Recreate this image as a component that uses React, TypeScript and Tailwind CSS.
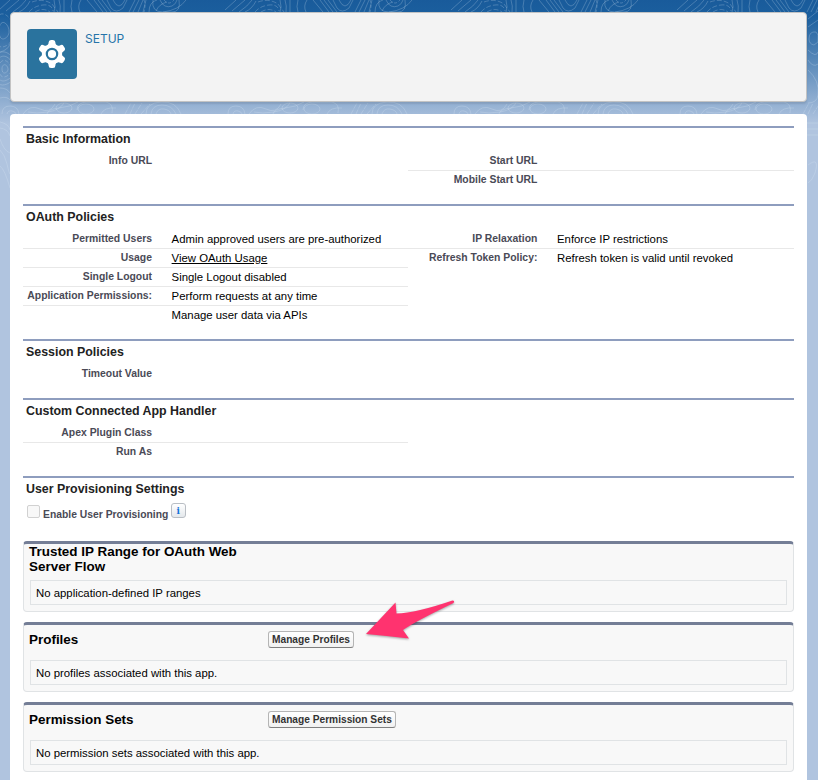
import React from "react";

type Field = { label?: string; value?: string; link?: boolean; line?: boolean };

function Rows({ items }: { items: Field[] }) {
  return (
    <div className="w-[385.4px] shrink-0">
      {items.map((f, i) => (
        <div key={i} className={`flex h-[19px] border-b ${f.line ? "border-[#e8e8e8]" : "border-transparent"}`}>
          <div className="w-[129px] shrink-0 text-right text-[10.4px] leading-[18px] font-bold whitespace-nowrap text-[#4a4a56]">{f.label}</div>
          <div className={`ml-[19.6px] text-[11.36px] leading-[19px] whitespace-nowrap text-black ${f.link ? "underline underline-offset-1" : ""}`}>{f.value}</div>
        </div>
      ))}
    </div>
  );
}

function Section({ title, height, children }: { title: string; height: string; children: React.ReactNode }) {
  return (
    <section className={`border-t-2 border-[#8e9dbe] ${height}`}>
      <h3 className="h-6 pt-[2px] pl-[3px] text-[12.4px] leading-[18px] font-bold text-[#222]">{title}</h3>
      {children}
    </section>
  );
}

function Related({ title, button, empty, height }: { title: string; button?: string; empty: string; height: string }) {
  return (
    <section className={`flex flex-col rounded-[4px] border border-t-[3px] border-[#e0e3e5] border-t-[#747e96] bg-[#f8f8f8] px-[5px] pb-[6px] ${height}`}>
      <div className={`flex ${button ? "pt-[5px]" : ""}`}>
        <h3 className={`w-[239px] pr-5 text-[13.44px] font-bold text-black ${button ? "pt-px leading-[17px]" : "leading-[15px]"}`}>{title}</h3>
        {button && (
          <button className="mt-px h-[17px] rounded-[3px] border border-[#b5b5b5] border-b-[#7f7f7f] bg-linear-to-b from-white to-[#f1f1f1] px-[3px] pt-px text-[10.18px] leading-[14px] font-bold whitespace-nowrap text-[#333]">{button}</button>
        )}
      </div>
      <div className="mx-px mt-auto h-[25px] border border-[#e0e3e5] pl-[5px] text-[11.36px] leading-[24px] text-black">{empty}</div>
    </section>
  );
}

const rings = (cx: number, cy: number, n: number, sx: number, sy: number) =>
  Array.from({ length: n }, (_, i) => {
    const a = sx * (i + 1);
    const b = sy * (i + 1);
    return (
      <path
        key={`${cx}-${cy}-${i}`}
        strokeDasharray={i % 3 === 1 ? "4 2" : undefined}
        d={`M${cx - a} ${cy} C${cx - a} ${cy - b} ${cx - a * 0.3} ${cy - b * 1.2} ${cx + a * 0.2} ${cy - b} S${cx + a * 1.1} ${cy - b * 0.3} ${cx + a} ${cy + b * 0.2} S${cx + a * 0.2} ${cy + b} ${cx - a * 0.2} ${cy + b} S${cx - a} ${cy + b * 0.7} ${cx - a} ${cy}Z`}
      />
    );
  });

function Contours() {
  return (
    <svg className="absolute inset-0" width="818" height="205" fill="none" stroke="#dce9f7" strokeOpacity=".3" strokeWidth=".8">
      {[-34, 192, 418, 644].map((x) => (
        <g key={x}>
          <path d={`M${x + 33} 10l11-10M${x + 40} 11l13-11M${x + 47} 12Q${x + 56} 6 ${x + 60} 0M${x + 53} 12Q${x + 60} 9 ${x + 64} 1`} />
          <path d={`M${x + 63} 12Q${x + 68} 6 ${x + 77} 5T${x + 87} 11M${x + 69} 12Q${x + 77} 7 ${x + 84} 12M${x + 66} 2Q${x + 77}-2 ${x + 86} 4L${x + 92} 12`} strokeDasharray="5 2" />
          <path d={`M${x + 88} 0q2 7 0 12M${x + 93} 0q2 6 1 12M${x + 98} 0v12M${x + 106} 0q-2 7 0 12M${x + 115} 0q-4 6-1 12`} />
          <path d={`M${x + 121} 0l10 12M${x + 128} 0l9 12M${x + 132} 0l9 12M${x + 136} 0l9 12M${x + 141} 0l4 8q5 6 12 0l4-8M${x + 147} 0q6 12 12 0`} />
          <path d={`M${x + 163} 12l6-12M${x + 167} 12l6-12M${x + 172} 12l5-12M${x + 177} 12l3-12M${x + 183} 12q0-10 8-12`} />
          <path d={`M${x + 197} 12q16-2 23-12M${x + 190} 11q3-7 11-9`} />
        </g>
      ))}
      {[121, 347, 573].map((x) => (
        <g key={x}>
          <path d={`M${x + 32} 0q-2 12 10 12h9q9 0 7-12M${x + 39} 0q4 9 12 6q4-2 5-6`} />
          <path d={`M${x + 43} 0q5 6 10 0M${x + 23} 0q2 5 0 12`} strokeDasharray="3 2" />
        </g>
      ))}
      {[-42, 184, 410, 636].map((x) => (
        <g key={x}>
          <path d={`M${x + 44} 114q0-8 8-8t9 8M${x + 49} 114q1-4 5-3t4 3M${x + 65} 114q7-10 17-5t15-5`} />
          <path d={`M${x + 70} 112q8 2 20 0t16-9M${x + 89} 114q1-5 12-6t19-6`} />
          <ellipse cx={x + 106} cy="108" rx="8" ry="5" />
          <ellipse cx={x + 128} cy="109" rx="8" ry="5" />
          <path d={`M${x + 119} 110q0-7 9-8h20q8 2 6 11M${x + 143} 114q3-7 15-6`} />
          <path d={`M${x + 167} 114l6-11M${x + 172} 114l5-11M${x + 177} 114l7-11M${x + 183} 114l9-10`} strokeDasharray="5 1" />
          <path d={`M${x + 193} 114q1-9 11-9t14 9M${x + 198} 114q2-6 8-5t7 5M${x + 188} 114q0-11 15-12t20 12`} />
        </g>
      ))}
      {rings(4, 31, 2, 5, 8)}
      {rings(5, 69, 4, 3, 4)}
      <path d="M0 52q8-2 10-8M0 88q7 0 10 5M0 98q7-2 10 2M0 122q9 2 10 8M0 128q8 1 10 8M0 139q4 12 10 14M0 150q5 5 7 14t3 10M0 166q5 4 10 22" />
      <path d="M808 19l10-8M808 27l10-7M808 50q8 8 10 2M808 60q5 8 10 4M807 123h11M807 129h11M807 135h11M808 165q12-9 7 8-3 8-7 10" />
      <path d="M809 39q0-8 7-7l2 3v7l-4 3q-5-1-5-6M808 70q12 11 10 25-1 8-10 8" />
    </svg>
  );
}

export default function App() {
  return (
    <div className="relative h-[780px] w-[818px] overflow-hidden bg-[#b0c4df] bg-[linear-gradient(to_bottom,#195b9b_0px,#1b5f9e_16px,#b0c4df_124px)] font-['Liberation_Sans',Arial,sans-serif]">
      <Contours />
      <div className="relative flex h-full flex-col gap-3 px-[10px] pt-3">
        <header className="flex h-[90px] w-[797px] gap-2 rounded-[4px] border border-[#c3c3c3] bg-[#f3f3f3] px-4 pt-4 shadow-[0_2px_2px_rgba(0,0,0,0.1)]">
          <div className="flex size-[50px] items-center justify-center rounded-[4px] bg-[#2a739e]">
            <svg width="50" height="50" viewBox="0 0 50 50">
              <g fill="white" transform="translate(25 25)">
                <circle r="10.2" />
                {[0, 60, 120, 180, 240, 300].map((a) => (
                  <path key={a} transform={`rotate(${a})`} d="M-6-7C-4-9-3.4-10-3.4-11.5Q-3.4-14-1-14H1Q3.4-14 3.4-11.5C3.4-10 4-9 6-7Z" />
                ))}
                <circle r="5.2" fill="none" stroke="#2a739e" strokeWidth="2.2" />
              </g>
            </svg>
          </div>
          <div className="h-5 pt-px font-['Inter',sans-serif] text-[12px] leading-[18px] text-[#2574a9]">SETUP</div>
        </header>

        <main className="w-[797px] flex-1 rounded-t-[4px] bg-white px-[13px] pt-3">
          <Section title="Basic Information" height="h-[78px]">
            <div className="flex">
              <Rows items={[{ label: "Info URL" }]} />
              <Rows items={[{ label: "Start URL", line: true }, { label: "Mobile Start URL" }]} />
            </div>
          </Section>
          <Section title="OAuth Policies" height="h-[135px]">
            <div className="flex">
              <Rows
                items={[
                  { label: "Permitted Users", value: "Admin approved users are pre-authorized", line: true },
                  { label: "Usage", value: "View OAuth Usage", link: true, line: true },
                  { label: "Single Logout", value: "Single Logout disabled", line: true },
                  { label: "Application Permissions:", value: "Perform requests at any time", line: true },
                  { value: "Manage user data via APIs" },
                ]}
              />
              <Rows
                items={[
                  { label: "IP Relaxation", value: "Enforce IP restrictions", line: true },
                  { label: "Refresh Token Policy:", value: "Refresh token is valid until revoked" },
                ]}
              />
            </div>
          </Section>
          <Section title="Session Policies" height="h-[59px]">
            <Rows items={[{ label: "Timeout Value" }]} />
          </Section>
          <Section title="Custom Connected App Handler" height="h-[78px]">
            <Rows items={[{ label: "Apex Plugin Class", line: true }, { label: "Run As" }]} />
          </Section>
          <Section title="User Provisioning Settings" height="h-[65px]">
            <div className="flex pt-px pl-1">
              <span className="mt-[2px] size-[13px] rounded-[2px] border border-[#d1d1d1] bg-[#f8f8f8]" />
              <span className="ml-[3px] pt-[5px] text-[10.35px] leading-[14px] font-bold whitespace-nowrap text-[#4a4a56]">Enable User Provisioning</span>
              <span className="ml-[2.5px] flex h-[15px] w-[15px] items-center justify-center rounded-[3px] border border-[#b9bec4] bg-linear-to-b from-white to-[#e4e8ec] pt-px font-['DejaVu_Serif',serif] text-[9px] leading-none font-bold text-[#1673d9]">i</span>
            </div>
          </Section>
          <div className="flex flex-col gap-[10px]">
            <Related title="Trusted IP Range for OAuth Web Server Flow" empty="No application-defined IP ranges" height="h-[71px]" />
            <Related title="Profiles" button="Manage Profiles" empty="No profiles associated with this app." height="h-[70px]" />
            <Related title="Permission Sets" button="Manage Permission Sets" empty="No permission sets associated with this app." height="h-[70px]" />
          </div>
        </main>
      </div>
      <svg className="absolute top-[595px] left-[360px] drop-shadow-[0_1px_1px_rgba(0,0,0,0.35)]" width="100" height="50" viewBox="0 0 100 50">
        <path fill="#ff336f" d="M6 39 35.5 7.5 36.5 18.5Q56 18 92.5 5.5Q95 5.5 93.5 8Q56 26 43 35L49 43.5Q28 41 6 39Z" />
      </svg>
    </div>
  );
}
